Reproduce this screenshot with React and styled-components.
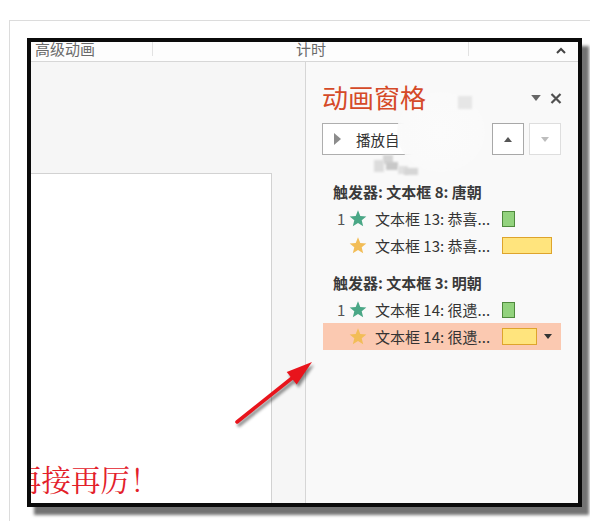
import React from "react";
import styled, { createGlobalStyle } from "styled-components";

const Global = createGlobalStyle`
  html, body { margin: 0; padding: 0; background: #fff; }
  body { font-family: "Noto Sans CJK SC", "Noto Sans", sans-serif; }
`;

const Page = styled.div`
  position: relative;
  width: 590px;
  height: 521px;
  overflow: hidden;
  background: #fff;
`;

const OuterFrame = styled.div`
  margin: 20px 0 0 9px;
  width: 581px;
  height: 501px;
  box-sizing: border-box;
  border-top: 1px solid #dcdcdc;
  border-left: 1px solid #dcdcdc;
  padding: 17px 0 0 17px;
`;

const Shot = styled.div`
  width: 555px;
  height: 469px;
  box-sizing: border-box;
  border: 4px solid #0b0b0b;
  box-shadow: 7px 8px 3px rgba(0, 0, 0, 0.55);
  background: #fff;
  display: flex;
  flex-direction: column;
  overflow: hidden;
`;

const Ribbon = styled.div`
  height: 20px;
  box-sizing: border-box;
  border-bottom: 1px solid #d7d7d7;
  background: #fdfdfd;
  display: flex;
  align-items: flex-start;
  font-size: 15px;
  color: #6a6a6a;
`;

const RibbonGroup = styled.div`
  width: ${(p) => p.$w}px;
  box-sizing: border-box;
  padding-left: ${(p) => p.$pad}px;
  height: 15px;
  line-height: 15px;
  margin-top: -1px;
  border-right: ${(p) => (p.$sep ? "1px solid #e2e2e2" : "none")};
  display: flex;
  align-items: center;
  white-space: nowrap;
`;

const Body = styled.div`
  flex: 1;
  display: flex;
  min-height: 0;
`;

const Editor = styled.div`
  width: 275px;
  box-sizing: border-box;
  border-right: 1px solid #d6d6d6;
  background: #f6f6f6;
  padding-top: 111px;
  display: flex;
  flex-direction: column;
`;

const Slide = styled.div`
  flex: 1;
  width: 241px;
  box-sizing: border-box;
  border-top: 1px solid #d2d2d2;
  border-right: 1px solid #d2d2d2;
  background: #fff;
  overflow: hidden;
  display: flex;
  flex-direction: column;
  justify-content: flex-end;
  padding-bottom: 9px;
`;

const SlideText = styled.div`
  margin-left: -19px;
  font-family: "Noto Serif CJK SC", "Noto Sans CJK SC", serif;
  font-size: 29.5px;
  line-height: 31px;
  color: #e3202a;
  white-space: nowrap;
`;

const Pane = styled.div`
  flex: 1;
  background: #f9f9f9;
  padding: 20px 17px 0 16px;
  display: flex;
  flex-direction: column;
`;

const TitleRow = styled.div`
  height: 30px;
  display: flex;
  align-items: center;
  justify-content: space-between;
`;

const Title = styled.div`
  position: relative;
  z-index: 2;
  font-size: 26px;
  line-height: 30px;
  color: #d54a28;
`;

const TitleIcons = styled.div`
  display: flex;
  align-items: center;
  gap: 9px;
  margin-right: -1px;
  margin-top: 2px;
`;

const ButtonRow = styled.div`
  margin-top: 11px;
  height: 32px;
  display: flex;
  align-items: center;
  gap: 5px;
`;

const PlayButton = styled.div`
  width: 113px;
  height: 32px;
  box-sizing: border-box;
  border: 1px solid #aeaeae;
  background: #fff;
  display: flex;
  align-items: center;
  padding-left: 11px;
  gap: 15px;
  font-size: 14.5px;
  color: #333;
`;

const Spacer = styled.div`
  flex: 1;
`;

const MoveButton = styled.div`
  width: 32px;
  height: 32px;
  box-sizing: border-box;
  border: 1px solid ${(p) => (p.$disabled ? "#dedede" : "#a8a8a8")};
  background: #fff;
  display: flex;
  align-items: center;
  justify-content: center;
`;

const List = styled.div`
  margin-top: 24px;
  margin-left: 1px;
  display: flex;
  flex-direction: column;
`;

const Trigger = styled.div`
  height: 26px;
  line-height: 26px;
  padding-left: 10px;
  font-size: 15px;
  font-weight: 700;
  color: #3a3a3a;
  margin-top: ${(p) => (p.$first ? 0 : 11)}px;
  white-space: nowrap;
`;

const Item = styled.div`
  height: 27px;
  display: flex;
  align-items: center;
  padding-left: 10px;
  background: ${(p) => (p.$selected ? "#fbc9b1" : "transparent")};
  font-size: 15px;
  color: #333;
`;

const Num = styled.div`
  width: 16px;
  box-sizing: border-box;
  padding-left: 4px;
  color: #555;
`;

const StarBox = styled.div`
  width: 18px;
  height: 17px;
  display: flex;
  margin-right: 8px;
`;

const ItemText = styled.div`
  width: 127px;
  white-space: nowrap;
  overflow: hidden;
`;

const Bar = styled.div`
  width: ${(p) => p.$w}px;
  height: ${(p) => p.$h}px;
  box-sizing: border-box;
  background: ${(p) => p.$fill};
  border: 1px solid ${(p) => p.$line};
`;

const Caret = styled.div`
  margin-left: 7px;
  display: flex;
`;

const Overlay = styled.div`
  position: absolute;
  left: ${(p) => p.$x}px;
  top: ${(p) => p.$y}px;
  width: ${(p) => p.$w}px;
  height: ${(p) => p.$h}px;
  pointer-events: none;
`;

const Blur = styled(Overlay)`
  border-radius: 50%;
  background: radial-gradient(ellipse at center, #fbfbfb 0%, #fafafa 60%, rgba(250,250,250,0.85) 75%, rgba(250,250,250,0) 100%);
`;

const Tile = styled(Overlay)`
  background: ${(p) => p.$c};
  filter: blur(0.8px);
`;

const Star = ({ color }) => (
  <svg width="18" height="17" viewBox="0 0 24 23">
    <polygon
      points="12,0.5 15.1,8.1 23.3,8.7 17,14 19,22 12,17.7 5,22 7,14 0.7,8.7 8.9,8.1"
      fill={color}
    />
  </svg>
);

const Tri = ({ dir, color, w = 8, h = 5 }) => (
  <svg width={w} height={h} viewBox="0 0 8 5">
    {dir === "up" ? (
      <polygon points="0,5 8,5 4,0" fill={color} />
    ) : (
      <polygon points="0,0 8,0 4,5" fill={color} />
    )}
  </svg>
);

const groups = [
  {
    trigger: "触发器: 文本框 8: 唐朝",
    items: [
      { num: "1", star: "#4aa786", text: "文本框 13: 恭喜...", bar: { w: 13, h: 16, fill: "#93d37e", line: "#4f8a3d" } },
      { num: "", star: "#f2bd57", text: "文本框 13: 恭喜...", bar: { w: 50, h: 17, fill: "#ffe47d", line: "#dea42c" } },
    ],
  },
  {
    trigger: "触发器: 文本框 3: 明朝",
    items: [
      { num: "1", star: "#4aa786", text: "文本框 14: 很遗...", bar: { w: 13, h: 16, fill: "#93d37e", line: "#4f8a3d" } },
      { num: "", star: "#f2bd57", text: "文本框 14: 很遗...", bar: { w: 35, h: 17, fill: "#ffe47d", line: "#dea42c" }, selected: true },
    ],
  },
];

export default function App() {
  return (
    <Page>
      <Global />
      <OuterFrame>
        <Shot>
          <Ribbon>
            <RibbonGroup $w={122} $pad={4} $sep>高级动画</RibbonGroup>
            <RibbonGroup $w={316} $pad={143} $sep>计时</RibbonGroup>
            <RibbonGroup $w={109} $pad={87}>
              <svg width="10" height="7" viewBox="0 0 10 7" style={{ marginTop: 4 }}>
                <polyline points="1,6 5,2 9,6" fill="none" stroke="#444" strokeWidth="2" />
              </svg>
            </RibbonGroup>
          </Ribbon>
          <Body>
            <Editor>
              <Slide>
                <SlideText>再接再厉！</SlideText>
              </Slide>
            </Editor>
            <Pane>
              <TitleRow>
                <Title>动画窗格</Title>
                <TitleIcons>
                  <Tri dir="down" color="#666" w={10} h={6} />
                  <svg width="12" height="11" viewBox="0 0 12 11">
                    <path d="M1.5 1 L10.5 10 M10.5 1 L1.5 10" stroke="#505050" strokeWidth="2.2" />
                  </svg>
                </TitleIcons>
              </TitleRow>
              <ButtonRow>
                <PlayButton>
                  <svg width="7" height="12" viewBox="0 0 7 12">
                    <polygon points="0,0 7,6 0,12" fill="#8c8c8c" />
                  </svg>
                  <span>播放自</span>
                </PlayButton>
                <Spacer />
                <MoveButton>
                  <Tri dir="up" color="#555" />
                </MoveButton>
                <MoveButton $disabled>
                  <Tri dir="down" color="#bdbdbd" />
                </MoveButton>
              </ButtonRow>
              <List>
                {groups.map((g, gi) => (
                  <React.Fragment key={gi}>
                    <Trigger $first={gi === 0}>{g.trigger}</Trigger>
                    {g.items.map((it, ii) => (
                      <Item key={ii} $selected={it.selected}>
                        <Num>{it.num}</Num>
                        <StarBox>
                          <Star color={it.star} />
                        </StarBox>
                        <ItemText>{it.text}</ItemText>
                        <Bar $w={it.bar.w} $h={it.bar.h} $fill={it.bar.fill} $line={it.bar.line} />
                        {it.selected && (
                          <Caret>
                            <Tri dir="down" color="#333" />
                          </Caret>
                        )}
                      </Item>
                    ))}
                  </React.Fragment>
                ))}
              </List>
            </Pane>
          </Body>
        </Shot>
      </OuterFrame>

      <Blur $x={397} $y={92} $w={88} $h={80} />
      <Tile $x={458} $y={96} $w={14} $h={13} $c="#e6e6e6" />
      <Tile $x={383} $y={155} $w={10} $h={9} $c="#d4d4d4" />
      <Tile $x={374} $y={160} $w={10} $h={12} $c="#dcdcdc" />
      <Tile $x={386} $y={162} $w={12} $h={8} $c="#c8c8c8" />
      <Tile $x={398} $y={166} $w={10} $h={8} $c="#e0e0e0" />
      <Tile $x={404} $y={168} $w={14} $h={7} $c="#d6d6d6" />

      <Overlay $x={228} $y={354} $w={92} $h={78}>
        <svg width="92" height="78" viewBox="0 0 92 78" style={{ filter: "drop-shadow(2px 3px 1.5px rgba(0,0,0,0.45))" }}>
          <line x1="9" y1="68" x2="66" y2="22.5" stroke="#e8141c" strokeWidth="3.6" strokeLinecap="round" />
          <polygon points="84,8 68.7,30.5 58.7,18" fill="#e8141c" />
        </svg>
      </Overlay>
    </Page>
  );
}
